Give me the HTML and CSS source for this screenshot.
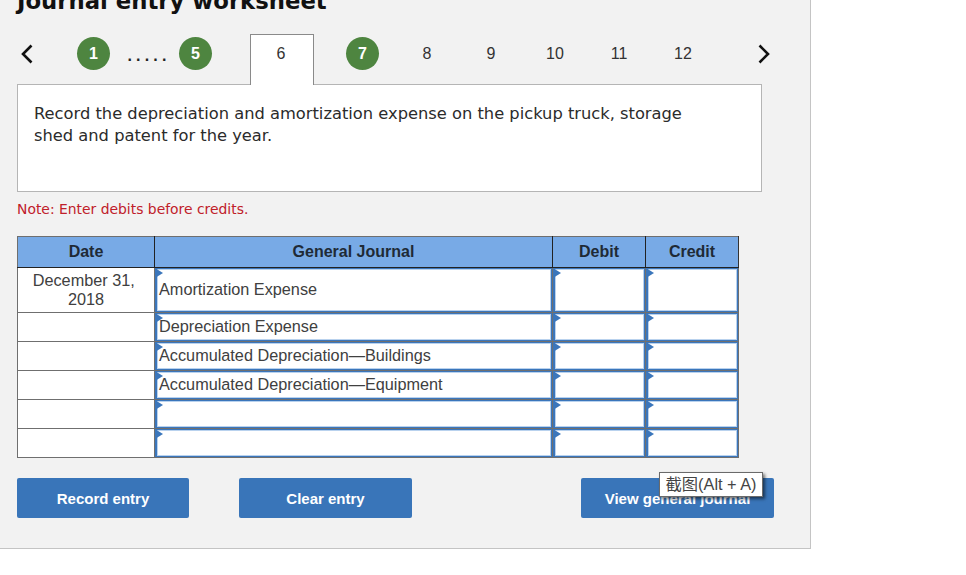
FILE: index.html
```html
<!DOCTYPE html>
<html lang="en">
<head>
<meta charset="utf-8">
<title>Journal entry worksheet</title>
<link rel="stylesheet" href="styles.css">
</head>
<body>
<main class="panel">
  <h1 class="title">Journal entry worksheet</h1>
  <nav class="tabs">
    <svg class="chev chev-prev" width="12" height="20" viewBox="0 0 12 20"><path d="M10.5 1.5 2 10l8.5 8.5" fill="none" stroke="#111" stroke-width="2.6"/></svg>
    <span class="circle c1">1</span>
    <span class="dots">.....</span>
    <span class="circle">5</span>
    <span class="tab active">6</span>
    <span class="circle c7">7</span>
    <span class="tab t8">8</span>
    <span class="tab">9</span>
    <span class="tab">10</span>
    <span class="tab">11</span>
    <span class="tab">12</span>
    <svg class="chev chev-next" width="12" height="20" viewBox="0 0 12 20"><path d="M1.5 1.5 10 10l-8.5 8.5" fill="none" stroke="#111" stroke-width="2.6"/></svg>
  </nav>
  <section class="prompt">Record the depreciation and amortization expense on the pickup truck, storage shed and patent for the year.</section>
  <p class="note">Note: Enter debits before credits.</p>
  <table class="journal">
    <colgroup><col class="w-date"><col class="w-acct"><col class="w-amt"><col class="w-amt"></colgroup>
    <thead><tr><th>Date</th><th>General Journal</th><th>Debit</th><th>Credit</th></tr></thead>
    <tbody>
      <tr class="tall"><td class="date">December 31,&nbsp; 2018</td><td class="inp"><div class="field acct">Amortization Expense</div></td><td class="inp"><div class="field"></div></td><td class="inp"><div class="field"></div></td></tr>
      <tr><td class="date"></td><td class="inp"><div class="field acct">Depreciation Expense</div></td><td class="inp"><div class="field"></div></td><td class="inp"><div class="field"></div></td></tr>
      <tr><td class="date"></td><td class="inp"><div class="field acct">Accumulated Depreciation—Buildings</div></td><td class="inp"><div class="field"></div></td><td class="inp"><div class="field"></div></td></tr>
      <tr><td class="date"></td><td class="inp"><div class="field acct">Accumulated Depreciation—Equipment</div></td><td class="inp"><div class="field"></div></td><td class="inp"><div class="field"></div></td></tr>
      <tr><td class="date"></td><td class="inp"><div class="field acct"></div></td><td class="inp"><div class="field"></div></td><td class="inp"><div class="field"></div></td></tr>
      <tr><td class="date"></td><td class="inp"><div class="field acct"></div></td><td class="inp"><div class="field"></div></td><td class="inp"><div class="field"></div></td></tr>
    </tbody>
  </table>
  <div class="actions">
    <button class="btn b1">Record entry</button>
    <button class="btn b2">Clear entry</button>
    <div class="view-wrap">
      <button class="btn b3">View general journal</button>
      <span class="tip">截图(Alt + A)</span>
    </div>
  </div>
</main>
</body>
</html>
```
FILE: styles.css
```css
* { box-sizing: border-box; }
html, body { margin: 0; padding: 0; background: #fff; overflow: hidden; }
body { width: 966px; height: 575px; font-family: "Liberation Sans", Arial, sans-serif; }
.panel {
  width: 811px; height: 549px; background: #f2f2f2;
  border-right: 1px solid #c4c4c4; border-bottom: 1px solid #c4c4c4;
  padding-left: 17px; overflow: hidden;
}
.title {
  margin: -12px 0 0; height: 46px;
  font: bold 22.75px/27px "DejaVu Sans", Verdana, sans-serif; color: #111;
}
.tabs { display: flex; align-items: center; height: 51px; position: relative; margin-bottom: -1px; }
.chev { flex: none; margin-top: -12px; }
.chev-prev { margin-left: 4px; margin-right: 44px; }
.chev-next { margin-left: 43px; }
.circle {
  flex: none; width: 33px; height: 33px; border-radius: 50%; background: #4e8540;
  color: #fff; font-size: 16px; font-weight: bold; text-align: center; line-height: 33px; margin-top: -12px;
}
.dots { flex: none; width: 69px; padding-left: 9px; text-align: center; font: bold 16px/1 "Liberation Sans", sans-serif; letter-spacing: 4.2px; color: #222; margin-top: -7px; }
.tab { flex: none; width: 64px; text-align: center; font-size: 16px; color: #333; margin-top: -12px; }
.tab.active {
  height: 51px; margin: 0 32px 0 38px; padding: 9px 2px 0 0; background: #fff;
  border: 1px solid #8a8a8a; border-bottom: 0; position: relative; z-index: 1; line-height: 20px;
}
.c7 { margin-right: 16px; }
.prompt {
  width: 745px; height: 108px; background: #fff; border: 1px solid #b5b5b5;
  padding: 18px 70px 0 16px; font: 16.3px/22px "DejaVu Sans", Verdana, sans-serif; color: #2b2b2b;
}
.note { margin: 9px 0 0; height: 35px; font: 13.9px/17px "DejaVu Sans", Verdana, sans-serif; color: #c0202a; }
.journal { border-collapse: collapse; table-layout: fixed; width: 721px; background: #fff; }
.w-date { width: 137px; } .w-acct { width: 398px; } .w-amt { width: 93px; }
.journal th {
  background: #78aae6; height: 31px; padding: 0; font-size: 16px; font-weight: bold; color: #1f2a36;
  border: 1px solid #222; border-top-color: #6f6f6f;
}
.journal th:first-child { border-left-color: #6f6f6f; }
.journal th:last-child { border-right-color: #333; }
.journal td { border: 1px solid #6f6f6f; padding: 0; height: 29px; }
.journal .tall td { height: 45px; }
.date { text-align: center; font-size: 16.25px; line-height: 19px; color: #404040; padding: 0 10px !important; }
.inp { position: relative; }
.field {
  position: absolute; inset: 0; background: #fff;
  border-style: solid; border-color: #3b76bb; border-width: 1px 1px 1px 2px;
  box-shadow: inset 0 0 0 1px #b9d2ee;
  font-size: 16.25px; color: #404040; display: flex; align-items: center; padding: 0 0 2px 2px;
}
.field::before {
  content: ""; position: absolute; left: -2px; top: -1px;
  border-left: 8px solid #3b76bb; border-top: 5.5px solid transparent; border-bottom: 5.5px solid transparent;
}
.actions { display: flex; margin-top: 20px; }
.btn {
  height: 40px; border: 0; border-radius: 2px; background: #3975b9; color: #fff;
  font: bold 15px "Liberation Sans", Arial, sans-serif; padding: 0;
}
.b1 { width: 172px; }
.b2 { width: 173px; margin-left: 50px; }
.view-wrap { position: relative; margin-left: 169px; }
.b3 { width: 193px; }
.tip {
  position: absolute; left: 78px; top: -6px; width: 104px; height: 25px; background: #fff; border: 1px solid #6a6a6a;
  box-shadow: 2px 2px 3px rgba(0,0,0,.55); font: 16.3px/23px "Liberation Sans", "Noto Sans CJK SC", sans-serif; text-align: center; color: #444; white-space: nowrap;
}
```
